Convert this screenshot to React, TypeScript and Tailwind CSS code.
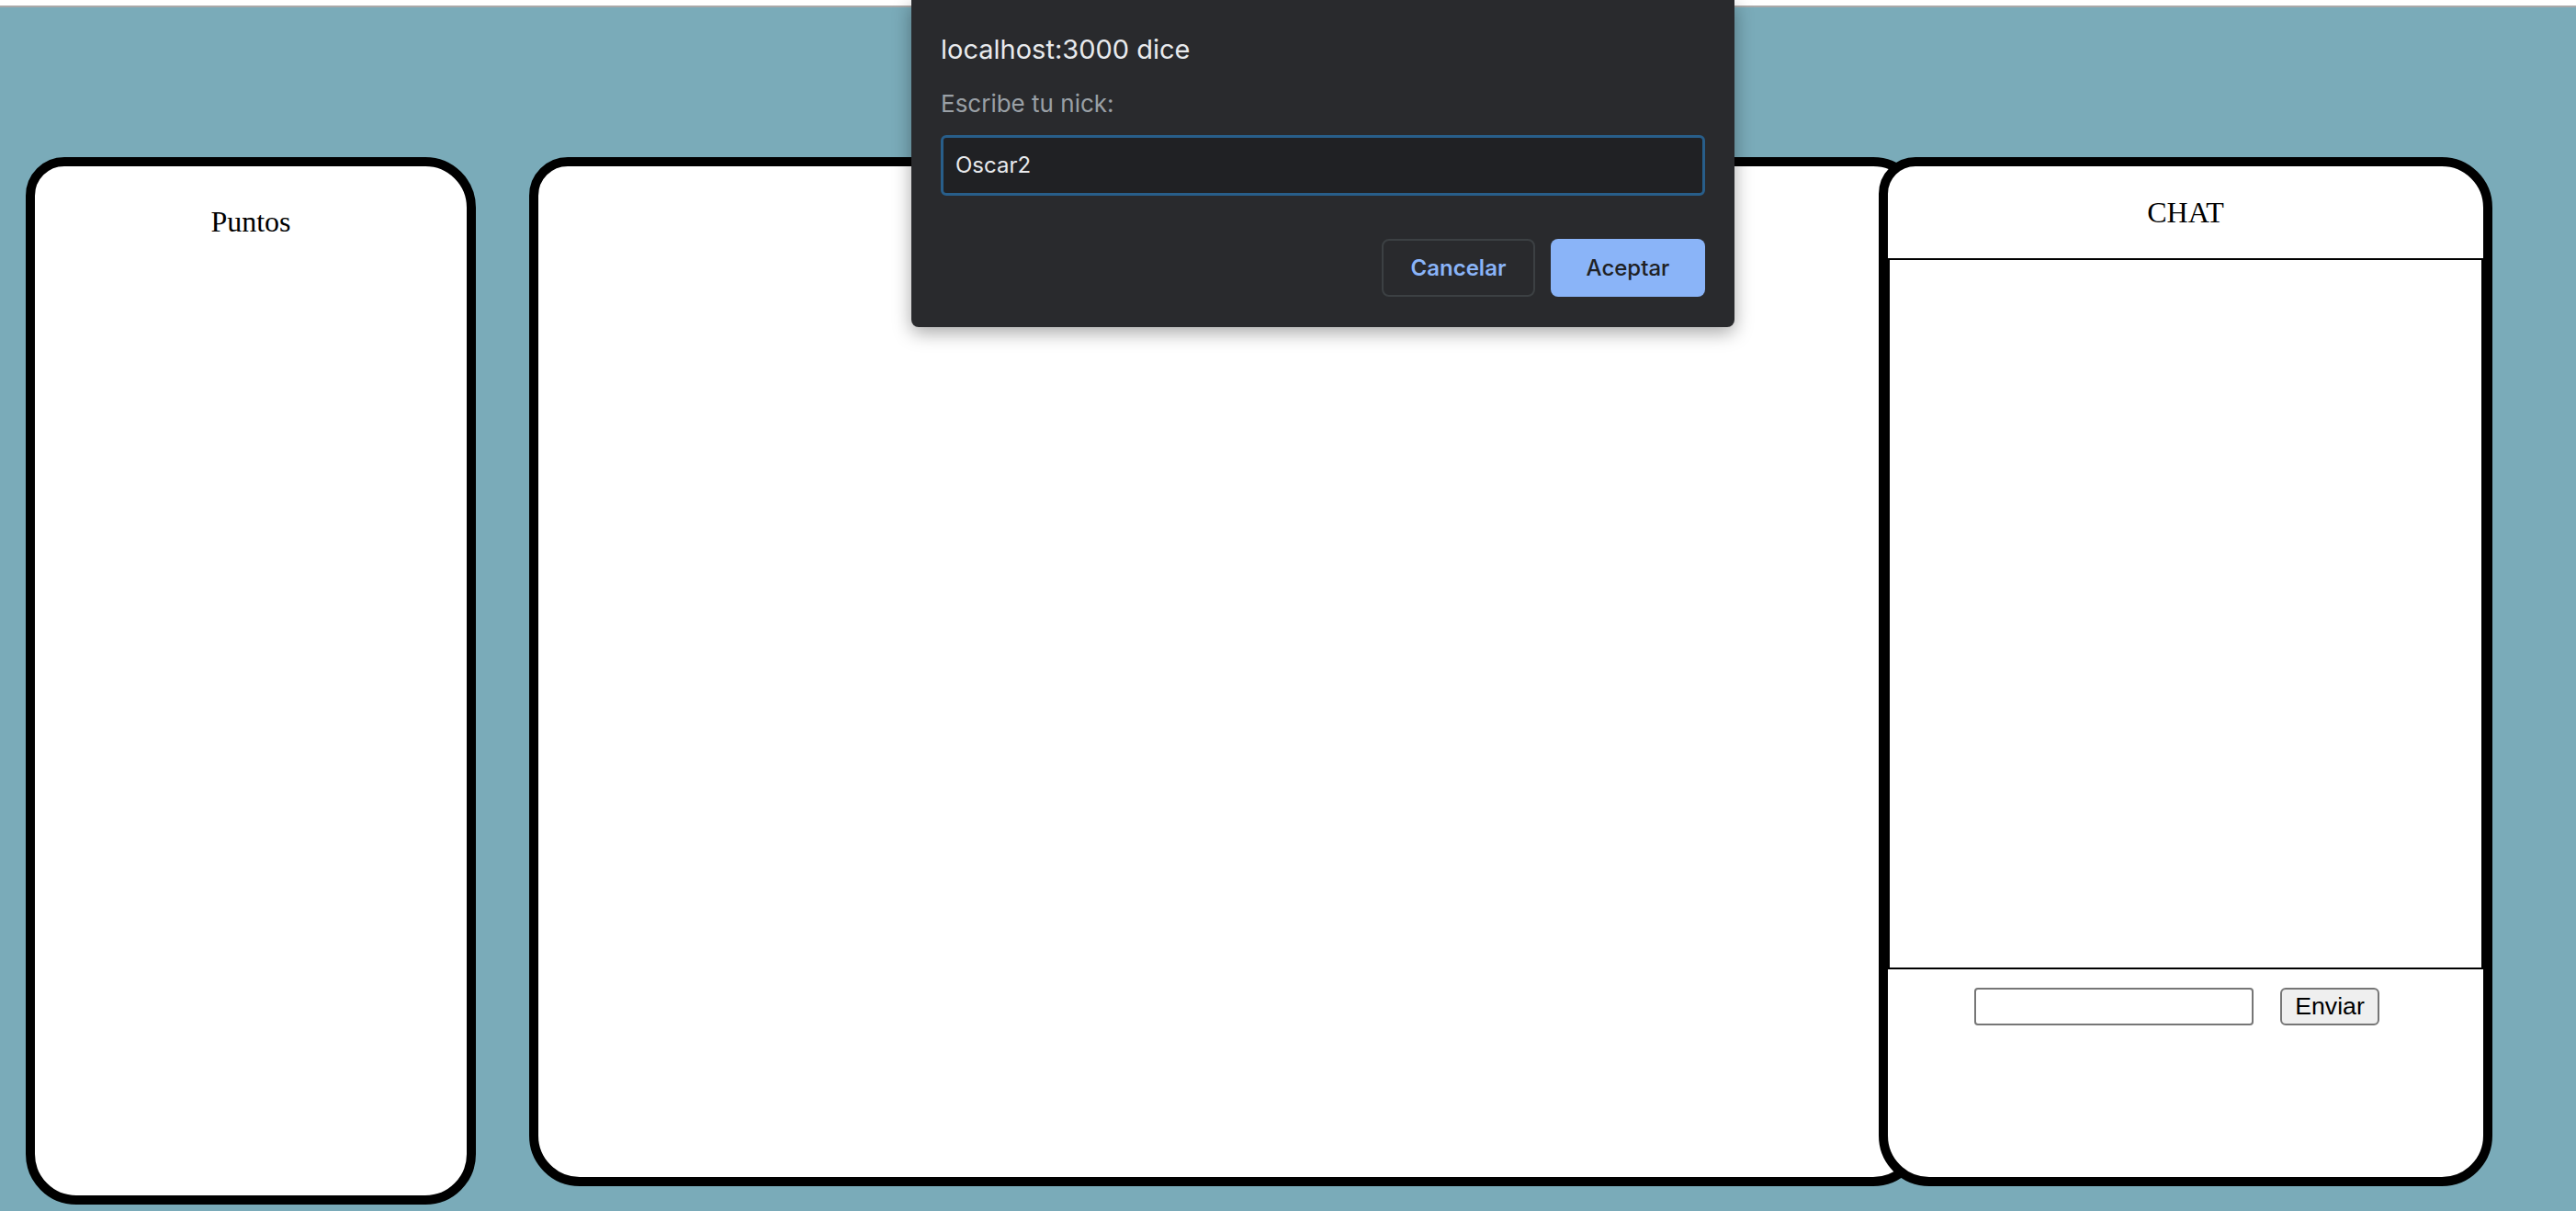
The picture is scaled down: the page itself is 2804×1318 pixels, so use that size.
import React from "react";

const serif = "font-['Liberation_Serif',_'Times_New_Roman',_serif]";
const sans = "font-['Liberation_Sans',_Arial,_sans-serif]";
const ui = "font-['Inter',_'Liberation_Sans',_sans-serif]";

function PromptDialog() {
  return (
    <div
      className={`absolute top-0 left-[992px] w-[896px] h-[356px] bg-[#292a2d] rounded-b-[8px] px-[32px] pt-[36px] shadow-[0_6px_20px_rgba(0,0,0,0.35)] ${ui}`}
    >
      <div className="text-[29px] leading-[35px] text-[#e8eaed]">localhost:3000 dice</div>
      <div className="mt-[26px] text-[26px] leading-[31px] text-[#9aa0a6]">Escribe tu nick:</div>
      <div className="mt-[19px] h-[66px] rounded-[6px] border-[3px] border-[#285e8a] bg-[#202124] flex items-center px-[13px]">
        <span className="text-[24px] text-[#e8eaed]">Oscar2</span>
      </div>
      <div className="mt-[47px] flex justify-end gap-[17px]">
        <button className="w-[167px] h-[63px] rounded-[8px] border-2 border-[#3c4043] text-[24px] font-semibold text-[#8ab4f8]">
          Cancelar
        </button>
        <button className="w-[168px] h-[63px] rounded-[8px] bg-[#8ab4f8] text-[24px] font-medium text-[#202124]">
          Aceptar
        </button>
      </div>
    </div>
  );
}

function ChatPanel() {
  return (
    <div className="relative z-10 -ml-[49px] w-[668px] h-[1120px] bg-white border-[10px] border-black rounded-tl-[40px] rounded-tr-[55px] rounded-b-[55px] flex flex-col">
      {/* cabecera */}
      <div className={`h-[100px] flex items-center justify-center text-[32px] text-black ${serif}`}>CHAT</div>
      {/* mensajes */}
      <div className="h-[774px] border-2 border-black" />
      {/* formulario */}
      <div className="mt-[20px] flex justify-center gap-[29px] pr-[19px]">
        <input
          type="text"
          className="w-[304px] h-[41px] border-2 border-[#767676] rounded-[4px] bg-white outline-none"
        />
        <button
          className={`w-[108px] h-[41px] border-2 border-[#767676] rounded-[6px] bg-[#efefef] text-[26.67px] text-black leading-none ${sans}`}
        >
          Enviar
        </button>
      </div>
    </div>
  );
}

export default function App() {
  return (
    <div className="relative w-[2804px] h-[1318px] overflow-hidden bg-[#7aabb9]">
      <div className="h-[6px] bg-white border-b-2 border-[#a9a9a9] box-content" />
      <div className="flex items-start pt-[163px] pl-[28px]">
        {/* Puntos */}
        <div className="w-[490px] h-[1140px] shrink-0 bg-white border-[10px] border-black rounded-tl-[42px] rounded-tr-[55px] rounded-b-[55px]">
          <div className={`pt-[36px] text-center text-[32px] text-black ${serif}`}>Puntos</div>
        </div>

        {/* Tablero */}
        <div className="ml-[58px] w-[1518px] h-[1120px] shrink-0 bg-white border-[10px] border-black rounded-tl-[42px] rounded-tr-[55px] rounded-b-[55px]" />

        <ChatPanel />
      </div>

      <PromptDialog />
    </div>
  );
}
